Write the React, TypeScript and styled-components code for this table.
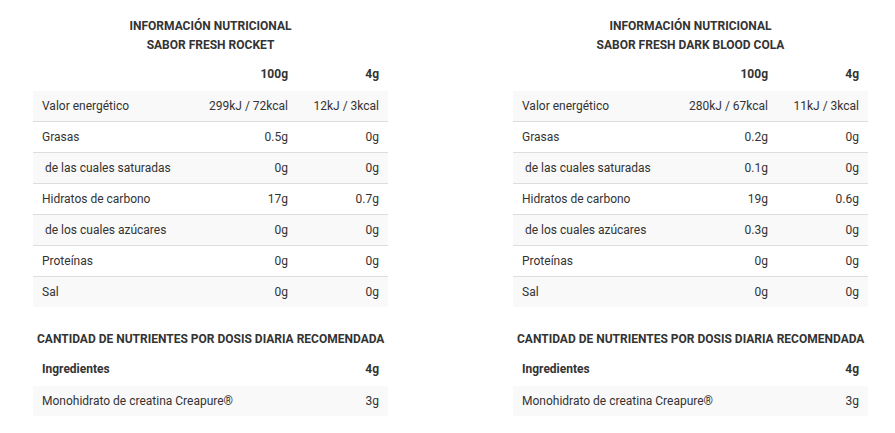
import React from 'react';
import styled, { createGlobalStyle } from 'styled-components';

const GlobalStyle = createGlobalStyle`
  body {
    margin: 0;
    background: #fff;
    font-family: Roboto, "Liberation Sans", Arial, sans-serif;
    color: #333;
  }
`;

const Page = styled.div`
  display: grid;
  grid-template-columns: 355px 355px;
  column-gap: 125px;
  padding: 17px 0 0 33px;
`;

const Column = styled.section`
  display: flex;
  flex-direction: column;
`;

const Title = styled.h3`
  margin: 0 0 3px;
  font-size: 12px;
  line-height: 19px;
  font-weight: 700;
  text-align: center;
  text-transform: uppercase;
  color: #333;
`;

const SubTitle = styled.h4`
  margin: 23px 0 4px 4px;
  font-size: 12px;
  line-height: 19px;
  font-weight: 700;
  text-transform: uppercase;
  color: #333;
`;

const Table = styled.table`
  width: 100%;
  border-collapse: collapse;
  font-size: 12px;
  color: #333;
`;

const Row = styled.tr<{ $striped?: boolean }>`
  background: ${(p) => (p.$striped ? '#f9f9f9' : '#fff')};
  & + & {
    border-top: 1px solid #ddd;
  }
`;

const HeadCell = styled.th<{ $width?: number; $left?: boolean }>`
  height: 31px;
  padding: 0 9px 2px;
  font-weight: 700;
  text-align: ${(p) => (p.$left ? 'left' : 'right')};
  width: ${(p) => (p.$width ? `${p.$width}px` : 'auto')};
  white-space: nowrap;
`;

const Cell = styled.td<{ $indent?: boolean; $num?: boolean }>`
  height: 30px;
  padding: 0 9px 0 ${(p) => (p.$indent ? '12px' : '9px')};
  text-align: ${(p) => (p.$num ? 'right' : 'left')};
  white-space: nowrap;
`;

type Nutrient = { label: string; per100: string; perDose: string; indent?: boolean };

type Flavor = { name: string; rows: Nutrient[]; creatine: string };

const flavors: Flavor[] = [
  {
    name: 'Sabor Fresh Rocket',
    creatine: '3g',
    rows: [
      { label: 'Valor energético', per100: '299kJ / 72kcal', perDose: '12kJ / 3kcal' },
      { label: 'Grasas', per100: '0.5g', perDose: '0g' },
      { label: 'de las cuales saturadas', per100: '0g', perDose: '0g', indent: true },
      { label: 'Hidratos de carbono', per100: '17g', perDose: '0.7g' },
      { label: 'de los cuales azúcares', per100: '0g', perDose: '0g', indent: true },
      { label: 'Proteínas', per100: '0g', perDose: '0g' },
      { label: 'Sal', per100: '0g', perDose: '0g' },
    ],
  },
  {
    name: 'Sabor Fresh Dark Blood Cola',
    creatine: '3g',
    rows: [
      { label: 'Valor energético', per100: '280kJ / 67kcal', perDose: '11kJ / 3kcal' },
      { label: 'Grasas', per100: '0.2g', perDose: '0g' },
      { label: 'de las cuales saturadas', per100: '0.1g', perDose: '0g', indent: true },
      { label: 'Hidratos de carbono', per100: '19g', perDose: '0.6g' },
      { label: 'de los cuales azúcares', per100: '0.3g', perDose: '0g', indent: true },
      { label: 'Proteínas', per100: '0g', perDose: '0g' },
      { label: 'Sal', per100: '0g', perDose: '0g' },
    ],
  },
];

const NutritionColumn = ({ flavor }: { flavor: Flavor }) => (
  <Column>
    <Title>
      Información nutricional
      <br />
      {flavor.name}
    </Title>
    <Table>
      <thead>
        <Row>
          <HeadCell $left />
          <HeadCell $width={82}>100g</HeadCell>
          <HeadCell $width={73}>4g</HeadCell>
        </Row>
      </thead>
      <tbody>
        {flavor.rows.map((r, i) => (
          <Row key={r.label} $striped={i % 2 === 0}>
            <Cell $indent={r.indent}>{r.label}</Cell>
            <Cell $num>{r.per100}</Cell>
            <Cell $num>{r.perDose}</Cell>
          </Row>
        ))}
      </tbody>
    </Table>
    <SubTitle>Cantidad de nutrientes por dosis diaria recomendada</SubTitle>
    <Table>
      <thead>
        <Row>
          <HeadCell $left>Ingredientes</HeadCell>
          <HeadCell $width={73}>4g</HeadCell>
        </Row>
      </thead>
      <tbody>
        <Row $striped>
          <Cell>Monohidrato de creatina Creapure®</Cell>
          <Cell $num>{flavor.creatine}</Cell>
        </Row>
      </tbody>
    </Table>
  </Column>
);

const App = () => (
  <>
    <GlobalStyle />
    <Page>
      {flavors.map((f) => (
        <NutritionColumn key={f.name} flavor={f} />
      ))}
    </Page>
  </>
);

export default App;
